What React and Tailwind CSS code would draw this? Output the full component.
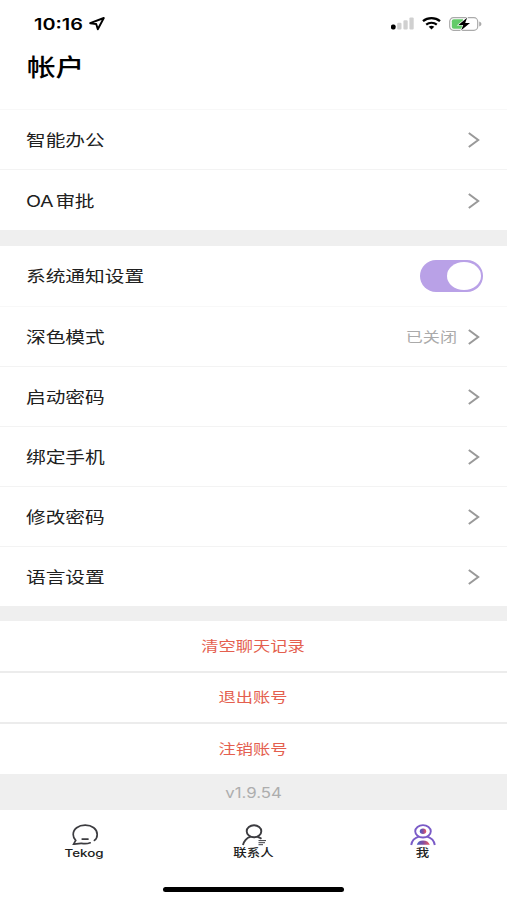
import React, { useState } from 'react';

const menuRows = [
    { id: 'office', label: '智能办公', height: 'h-[60px]' },
    { id: 'approval', label: 'OA 审批', height: 'h-[60px]', tight: true },
];

const settingRows = [
    { id: 'theme', label: '深色模式', value: '已关闭', height: 'h-[60px]' },
    { id: 'launch', label: '启动密码', height: 'h-[60px]' },
    { id: 'phone', label: '绑定手机', height: 'h-[60px]' },
    { id: 'password', label: '修改密码', height: 'h-[60px]' },
    { id: 'language', label: '语言设置', height: 'h-[59px]' },
];

const actions = [
    { label: '清空聊天记录', height: 'h-[50px]' },
    { label: '退出账号', height: 'h-[49px]' },
    { label: '注销账号', height: 'h-[50px]' },
];

const Chevron = () => (
    <svg width="14" height="18" viewBox="0 0 14 18" fill="none" stroke="#999" strokeWidth="2">
        <path d="M1.8 2 L11.2 9 L1.8 16" />
    </svg>
);

const StatusBar = () => (
    <div className="h-[46px] pl-[34px] pr-[25px] pt-px flex items-center justify-between">
        <div className="flex items-center gap-[5px]">
            <div className="w-[50px] h-6 leading-6">
                <span className="inline-block origin-left scale-x-[1.24] text-[16px] font-semibold text-black whitespace-nowrap">10:16</span>
            </div>
            <svg width="16" height="14" viewBox="0 0 16 14" fill="none" stroke="#000" strokeWidth="1.9" strokeLinejoin="round">
                <path d="M14.8 1 L1.2 6.2 L7.2 7 L8.8 12.3 Z" />
            </svg>
        </div>
        <div className="flex items-center gap-[8px]">
            <svg width="23" height="13" viewBox="0 0 23 13">
                <rect x="0" y="7.5" width="4.6" height="5" rx="1.8" fill="#000" />
                <rect x="6.2" y="5.8" width="4.3" height="6.7" rx="1.1" fill="#d0d0d0" />
                <rect x="12.4" y="3.3" width="4.3" height="9.2" rx="1.1" fill="#d0d0d0" />
                <rect x="18.4" y="0.5" width="4.3" height="12" rx="1.1" fill="#d0d0d0" />
            </svg>
            <svg width="19" height="13" viewBox="0 0 19 13" fill="none" stroke="#000">
                <path d="M1 4.2 C5.8 0.2 13.2 0.2 18 4.2" strokeWidth="2.3" />
                <path d="M4.2 7.6 C7.2 5.1 11.8 5.1 14.8 7.6" strokeWidth="2.2" />
                <path d="M6.7 9.8 Q9.5 7.8 12.3 9.8 L9.5 12.5 Z" fill="#000" stroke="none" />
            </svg>
            <svg width="33" height="14" viewBox="0 0 33 14">
                <rect x="0.7" y="0.7" width="28" height="12.6" rx="3.8" fill="#fff" stroke="#aaa" strokeWidth="1.2" />
                <path d="M4.8 2.3 H14 V11.7 H4.8 Q2.8 11.7 2.8 9.7 V4.3 Q2.8 2.3 4.8 2.3 Z" fill="#63cb69" />
                <path d="M30.2 4.5 Q32.5 5.4 32.5 7 Q32.5 8.6 30.2 9.5 Z" fill="#aaa" />
                <path d="M18.1 0.7 L9.4 7.9 H14.2 L12.2 13.3 L21 6 H16.2 Z" fill="#000" stroke="#fff" strokeWidth="1.2" paintOrder="stroke" />
            </svg>
        </div>
    </div>
);

const Label = ({ children, tight }) => (
    <span className={`inline-block origin-left scale-x-[1.23] text-[16px] text-[#202020] whitespace-nowrap ${tight ? 'tracking-[-0.4px] [word-spacing:-2px]' : ''}`}>
        {children}
    </span>
);

const Row = ({ row, last }) => (
    <div className={`${row.height} ${last ? '' : 'border-b border-[#f3f3f3]'} pt-px pl-[25.5px] pr-[26px] flex items-center justify-between`}>
        <Label tight={row.tight}>{row.label}</Label>
        <div className="flex items-center gap-[10px]">
            {row.value && (
                <span className="inline-block -mt-[2px] origin-right scale-x-[1.22] text-[14px] text-[#aaaaaa] whitespace-nowrap">{row.value}</span>
            )}
            <Chevron />
        </div>
    </div>
);

const ChatIcon = () => (
    <svg width="28" height="22" viewBox="0 0 28 22" fill="none" stroke="#3c3c40" strokeWidth="1.7" strokeLinecap="round">
        <path d="M23.4 16.4 C25.3 15 26.2 13 26.2 10.4 C26.2 5 21 1.2 14.2 1.2 C7.4 1.2 2.2 5 2.2 10.4 C2.2 13 3.1 14.8 4.7 16.4 L2.6 20.1 C6.5 20.3 8.5 19.2 10.5 19.4 C13.4 19.9 16.7 19.8 19.2 18.8" />
        <path d="M11.2 15.1 H17" />
    </svg>
);

const ContactIcon = () => (
    <svg width="28" height="22" viewBox="0 0 28 22" fill="none" stroke="#3c3c40" strokeWidth="1.9">
        <ellipse cx="14" cy="7.3" rx="7.3" ry="6" />
        <path d="M3 21 C3.7 17.3 6.8 13.5 10.6 12.9 M17.4 12.8 Q19.6 13.4 21.5 14.7" />
        <path d="M18.5 16.6 H26 M18.5 18.7 H25 M18.5 20.7 H23" strokeWidth="1" />
    </svg>
);

const MeIcon = () => (
    <svg width="26" height="22" viewBox="0 0 26 22" fill="none">
        <defs>
            <linearGradient id="meFill" x1="0" y1="0" x2="1" y2="0">
                <stop offset="0" stopColor="#4a5fc8" />
                <stop offset="0.5" stopColor="#85509f" />
                <stop offset="1" stopColor="#ee5a60" />
            </linearGradient>
        </defs>
        <ellipse cx="13" cy="7.3" rx="7.8" ry="6.2" stroke="#7a5bc7" strokeWidth="1.9" />
        <ellipse cx="13" cy="7.3" rx="3.2" ry="2.7" fill="url(#meFill)" />
        <path d="M1.2 21 C1.8 17.2 4.5 14 8.8 12.7 M17.2 12.7 C21.5 14 24.2 17.2 24.8 21" stroke="#7a5bc7" strokeWidth="1.9" />
        <path d="M6.8 20.8 Q8 16.4 13 16.4 Q18.2 16.4 19.8 20.8 Z" fill="url(#meFill)" />
    </svg>
);

const tabs = [
    { id: 'chat', label: 'Tekog', icon: <ChatIcon /> },
    { id: 'contacts', label: '联系人', icon: <ContactIcon /> },
    { id: 'me', label: '我', icon: <MeIcon /> },
];

const App = () => {
    const [notify, setNotify] = useState(true);

    return (
        <div className="w-full h-[900px] bg-white flex flex-col overflow-hidden font-[Inter,'Noto_Sans_CJK_SC',sans-serif]">
            <StatusBar />
            <div className="h-[64px] pl-[27px] pt-[4px] border-b border-[#f8f8f8]">
                <h1 className="inline-block origin-left scale-x-[1.19] text-[24px] leading-[36px] font-medium text-black whitespace-nowrap">帐户</h1>
            </div>

            {menuRows.map((row, i) => (
                <Row key={row.id} row={row} last={i === menuRows.length - 1} />
            ))}

            <div className="h-[16px] bg-[#efefef] shrink-0" />

            <div className="h-[61px] border-b border-[#f8f8f8] pl-[25.5px] pr-[24px] flex items-center justify-between">
                <Label>系统通知设置</Label>
                <button
                    className={`w-[63px] h-[32px] p-[2px] rounded-full flex items-center ${notify ? 'justify-end bg-[#b9a1e7]' : 'justify-start bg-gray-300'}`}
                    onClick={() => setNotify(!notify)}
                >
                    <span className="block w-[34px] h-[28px] rounded-[50%] bg-white" />
                </button>
            </div>
            {settingRows.map((row, i) => (
                <Row key={row.id} row={row} last={i === settingRows.length - 1} />
            ))}

            <div className="h-[15px] bg-[#efefef] shrink-0" />

            <div className="flex flex-col gap-[2px] bg-[#ececec]">
                {actions.map((action) => (
                    <button key={action.label} className={`${action.height} pb-[2px] pr-[2px] bg-white flex items-center justify-center`}>
                        <span className="inline-block scale-x-[1.23] text-[14px] text-[#e45f4f] whitespace-nowrap">{action.label}</span>
                    </button>
                ))}
            </div>

            <div className="h-[36px] bg-[#efefef] flex items-center justify-center">
                <span className="inline-block scale-x-[1.2] text-[14px] text-[#adadad]">v1.9.54</span>
            </div>

            <div className="h-[64px] pt-[14px] flex">
                {tabs.map((tab) => (
                    <div key={tab.id} className="flex-1 flex flex-col items-center">
                        {tab.icon}
                        <span className="inline-block scale-x-[1.22] text-[11px] leading-[14px] font-medium text-[#202020] whitespace-nowrap">{tab.label}</span>
                    </div>
                ))}
            </div>
            <div className="flex justify-center pt-[13px]">
                <div className="w-[181px] h-[5px] rounded-full bg-black" />
            </div>
        </div>
    );
};

export default App;
